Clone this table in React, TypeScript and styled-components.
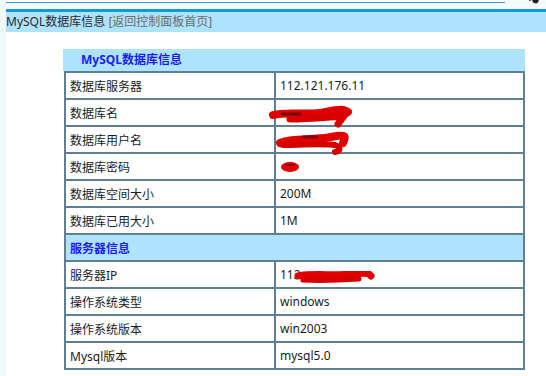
import React from "react";
import styled, { createGlobalStyle } from "styled-components";

const GlobalStyle = createGlobalStyle`
  html, body {
    margin: 0;
    padding: 0;
    background: #f1f8fc;
    font-family: "Noto Sans", "Noto Sans CJK SC", sans-serif;
    font-size: 12px;
    color: #1b1b1b;
  }
`;

type Row = { label: string; value?: string; mark?: "name" | "user" | "pass" | "ip" };

const dbRows: Row[] = [
  { label: "数据库服务器", value: "112.121.176.11" },
  { label: "数据库名", mark: "name" },
  { label: "数据库用户名", mark: "user" },
  { label: "数据库密码", mark: "pass" },
  { label: "数据库空间大小", value: "200M" },
  { label: "数据库已用大小", value: "1M" },
];

const serverRows: Row[] = [
  { label: "服务器IP", value: "112", mark: "ip" },
  { label: "操作系统类型", value: "windows" },
  { label: "操作系统版本", value: "win2003" },
  { label: "Mysql版本", value: "mysql5.0" },
];

// red marker strokes hiding private values
function Scribble({ kind }: { kind: NonNullable<Row["mark"]> }) {
  const soft = (
    <defs>
      <filter id={`soft-${kind}`} x="-10%" y="-30%" width="120%" height="160%">
        <feGaussianBlur stdDeviation="0.7" />
      </filter>
    </defs>
  );
  const f = `url(#soft-${kind})`;
  if (kind === "name") {
    return (
      <Mark width="84" height="26" style={{ left: -8, top: 4 }}>
        {soft}
        <g filter={f} fill="none" strokeLinecap="round">
          <path d="M5 11 C20 7 40 12 58 8 S76 6 80 8" stroke="#e00000" strokeWidth="8" />
          <path d="M22 15 C40 15 60 13 76 12 L70 20" stroke="#d80000" strokeWidth="7" />
          <path d="M14 10 L32 10" stroke="#7a0000" strokeWidth="3" />
        </g>
      </Mark>
    );
  }
  if (kind === "user") {
    return (
      <Mark width="78" height="28" style={{ left: -3, top: 3 }}>
        {soft}
        <g filter={f} fill="none" strokeLinecap="round">
          <path d="M7 13 C20 7 40 11 58 7 S72 8 70 13" stroke="#e00000" strokeWidth="8" />
          <path d="M10 15 C30 15 50 13 62 15 C68 17 68 21 62 22" stroke="#d40000" strokeWidth="6" />
          <path d="M30 7 L44 7" stroke="#8c0000" strokeWidth="3" />
        </g>
      </Mark>
    );
  }
  if (kind === "pass") {
    return (
      <Mark width="28" height="18" style={{ left: 2, top: 4 }}>
        {soft}
        <g filter={f}>
          <ellipse cx="12" cy="9" rx="9" ry="5" fill="#e00000" />
          <path d="M8 7 L16 7" stroke="#8c0000" strokeWidth="2" strokeLinecap="round" />
        </g>
      </Mark>
    );
  }
  return (
    <Mark width="84" height="20" style={{ left: 17, top: 6 }}>
      {soft}
      <g filter={f} fill="none" strokeLinecap="round">
        <path d="M5 8 C20 5 40 8 60 6 S76 7 78 8" stroke="#e00000" strokeWidth="7" />
        <path d="M10 12 C30 13 50 12 66 11" stroke="#d60000" strokeWidth="5" />
      </g>
    </Mark>
  );
}

export default function App() {
  return (
    <>
      <GlobalStyle />
      <Page>
        <TopStrip>
          <ThinLine />
          <Corner width="12" height="5" viewBox="0 0 12 5">
            <path d="M1 0 L3 0 M5 0 C5 3 10 4 10 0 Z" stroke="#222" strokeWidth="1.5" fill="#222" />
          </Corner>
        </TopStrip>
        <TitleBar>
          MySQL数据库信息 <BackLink>[返回控制面板首页]</BackLink>
        </TitleBar>
        <Panel>
          <PanelHead>MySQL数据库信息</PanelHead>
          <InfoTable>
            <tbody>
              {dbRows.map((r) => (
                <tr key={r.label}>
                  <LabelCell>{r.label}</LabelCell>
                  <ValueCell>
                    {r.value}
                    {r.mark && <Scribble kind={r.mark} />}
                  </ValueCell>
                </tr>
              ))}
              <tr>
                <SectionCell colSpan={2}>服务器信息</SectionCell>
              </tr>
              {serverRows.map((r) => (
                <tr key={r.label}>
                  <LabelCell>{r.label}</LabelCell>
                  <ValueCell>
                    {r.value}
                    {r.mark && <Scribble kind={r.mark} />}
                  </ValueCell>
                </tr>
              ))}
            </tbody>
          </InfoTable>
        </Panel>
      </Page>
    </>
  );
}

const Page = styled.div`
  margin-left: 6px;
  min-height: 376px;
  background: #ffffff;
`;

const TopStrip = styled.div`
  position: relative;
  height: 12px;
  background: #f5fafd;
  padding-top: 2px;
  box-sizing: border-box;
  border-bottom: 3px solid #0f9ade;
`;

const ThinLine = styled.div`
  width: 499px;
  height: 1px;
  background: #3a9ad8;
`;

const Corner = styled.svg`
  position: absolute;
  right: 6px;
  top: 0;
`;

const TitleBar = styled.div`
  height: 20px;
  line-height: 20px;
  background: #aee3fd;
  color: #2a2a2a;
  font-size: 12px;
  white-space: nowrap;
`;

const BackLink = styled.span`
  color: #6b6b6b;
`;

const Panel = styled.div`
  width: 462px;
  margin: 17px 0 0 57px;
`;

const PanelHead = styled.div`
  height: 22px;
  line-height: 22px;
  padding-left: 18px;
  background: #aee3fd;
  color: #1d1df2;
  font-weight: bold;
  font-size: 12px;
`;

const InfoTable = styled.table`
  width: 461px;
  margin-left: 1px;
  border-collapse: collapse;
  table-layout: fixed;
`;

const Cell = styled.td`
  height: 25px;
  padding: 0 0 0 4px;
  border: 2px solid #5f7f96;
  font-size: 12px;
  vertical-align: middle;
  white-space: nowrap;
`;

const LabelCell = styled(Cell)`
  width: 204px;
`;

const ValueCell = styled(Cell)`
  position: relative;
`;

const SectionCell = styled(Cell)`
  background: #aee3fd;
  color: #1d1df2;
  font-weight: bold;
`;

const Mark = styled.svg`
  position: absolute;
`;
